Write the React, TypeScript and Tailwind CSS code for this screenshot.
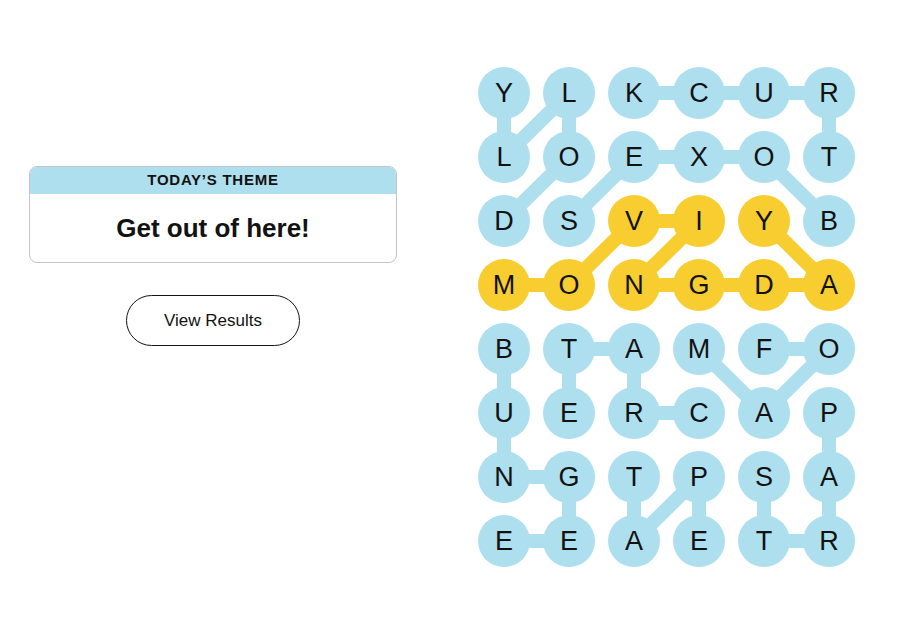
import React from "react";

const GRID = [
  "YLKCUR",
  "LOEXOT",
  "DSVIYB",
  "MONGDA",
  "BTAMFO",
  "UERCAP",
  "NGTPSA",
  "EEAETR",
];

const YELLOW = new Set(["0,3", "1,3", "2,2", "3,2", "2,3", "3,3", "4,3", "5,3", "4,2"]);

type Seg = [number, number, number, number];

const BLUE_SEGS: Seg[] = [
  [0, 0, 0, 1],
  [1, 0, 0, 1],
  [1, 0, 1, 1],
  [1, 1, 0, 2],
  [2, 0, 3, 0],
  [3, 0, 4, 0],
  [4, 0, 5, 0],
  [5, 0, 5, 1],
  [1, 2, 2, 1],
  [2, 1, 3, 1],
  [3, 1, 4, 1],
  [4, 1, 5, 2],
  [0, 4, 0, 5],
  [0, 5, 0, 6],
  [0, 6, 1, 6],
  [1, 6, 1, 7],
  [1, 7, 0, 7],
  [1, 5, 1, 4],
  [1, 4, 2, 4],
  [2, 4, 2, 5],
  [2, 5, 3, 5],
  [4, 4, 5, 4],
  [5, 4, 4, 5],
  [4, 5, 3, 4],
  [4, 6, 4, 7],
  [4, 7, 5, 7],
  [5, 7, 5, 6],
  [5, 6, 5, 5],
  [2, 6, 2, 7],
  [2, 7, 3, 6],
  [3, 6, 3, 7],
];

const YELLOW_SEGS: Seg[] = [
  [0, 3, 1, 3],
  [1, 3, 2, 2],
  [2, 2, 3, 2],
  [3, 2, 2, 3],
  [2, 3, 3, 3],
  [3, 3, 4, 3],
  [4, 3, 5, 3],
  [5, 3, 4, 2],
];

const cx = (c: number) => 26 + c * 65;
const cy = (r: number) => 26 + r * 64;

function Board() {
  return (
    <div className="relative w-[377px] h-[500px]">
      <svg className="absolute inset-0" width={377} height={500} viewBox="0 0 377 500">
        {BLUE_SEGS.map(([c1, r1, c2, r2], i) => (
          <line key={"b" + i} x1={cx(c1)} y1={cy(r1)} x2={cx(c2)} y2={cy(r2)} stroke="#aedfee" strokeWidth={14} />
        ))}
        {YELLOW_SEGS.map(([c1, r1, c2, r2], i) => (
          <line key={"y" + i} x1={cx(c1)} y1={cy(r1)} x2={cx(c2)} y2={cy(r2)} stroke="#f8cd30" strokeWidth={14} />
        ))}
      </svg>
      <div className="relative grid grid-cols-[repeat(6,52px)] grid-rows-[repeat(8,52px)] gap-x-[13px] gap-y-[12px]">
        {GRID.map((row, r) =>
          row.split("").map((ch, c) => (
            <div
              key={r + "-" + c}
              className={
                "w-[52px] h-[52px] rounded-full flex items-center justify-center text-[27px] text-[#121212] leading-none " +
                (YELLOW.has(c + "," + r) ? "bg-[#f8cd30]" : "bg-[#aedfee]")
              }
              style={{ fontFamily: '"Liberation Sans", Arial, sans-serif' }}
            >
              {ch}
            </div>
          ))
        )}
      </div>
    </div>
  );
}

export default function App() {
  return (
    <div
      className="w-[900px] h-[628px] bg-white flex items-start"
      style={{ fontFamily: '"Liberation Sans", Arial, sans-serif' }}
    >
      <div className="ml-[29px] mt-[166px] w-[368px] flex flex-col items-center">
        <div className="w-full rounded-[8px] border border-[#c4c4c4] overflow-hidden bg-white">
          <div className="h-[27px] bg-[#aedfee] flex items-center justify-center text-[15px] font-bold tracking-[0.05em] text-[#121212]">
            TODAY’S THEME
          </div>
          <div className="h-[68px] flex items-center justify-center text-[26px] font-bold text-[#121212]">
            Get out of here!
          </div>
        </div>
        <button className="mt-[32px] w-[174px] h-[51px] rounded-full border border-[#121212] bg-white text-[17px] text-[#121212] flex items-center justify-center">
          View Results
        </button>
      </div>
      <div className="ml-[81px] mt-[67px]">
        <Board />
      </div>
    </div>
  );
}
